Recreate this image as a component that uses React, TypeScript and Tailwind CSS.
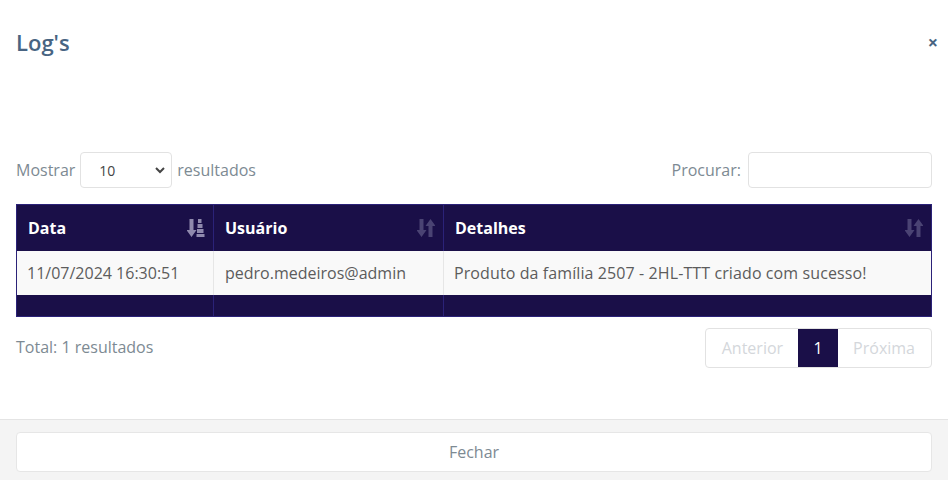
import React from 'react';

const SortIcon = ({ active }: { active?: boolean }) =>
  active ? (
    <svg width="18" height="20" viewBox="0 0 18 20" className="text-[#8f89ad]">
      <path d="M2.5 1h4v11h3L4.5 19-0.5 12h3z" fill="currentColor" />
      <rect x="11" y="1" width="3.5" height="4" fill="currentColor" />
      <rect x="10.5" y="6" width="5" height="4" fill="currentColor" />
      <rect x="10" y="11" width="6.5" height="4" fill="currentColor" />
      <rect x="9.5" y="16" width="8" height="3" fill="currentColor" />
    </svg>
  ) : (
    <svg width="18" height="20" viewBox="0 0 18 20" className="text-[#4a4373]">
      <path d="M2.5 1h4v11h3L4.5 19-0.5 12h3z" fill="currentColor" />
      <path d="M11.5 19h4V8h3L13.5 1 8.5 8h3z" fill="currentColor" />
    </svg>
  );

const App: React.FC = () => {
  const font = { fontFamily: '"Open Sans", sans-serif' };
  return (
    <div className="w-[948px] h-[480px] bg-white flex flex-col text-[#5c5c5c]" style={font}>
      <div className="flex items-center justify-between px-4 pt-[25px] pb-[16px]">
        <h1 className="text-[22px] font-semibold text-[#486482] leading-[34px]">Log's</h1>
        <button className="text-[#486482] text-[18px] font-bold leading-none mr-[-6px]">×</button>
      </div>

      <div className="px-4 pt-[77px]">
        <div className="flex items-center justify-between h-9">
          <div className="flex items-center gap-[5px] text-[16px] text-[#7d8a93]">
            <span>Mostrar</span>
            <div className="w-[92px] h-9 border border-[#e2e2e2] rounded flex items-center justify-between pl-[18px] pr-[4px] text-[14px] text-[#444]">
              <span>10</span>
              <svg width="14" height="14" viewBox="0 0 14 14">
                <path d="M3 5l4 4 4-4" stroke="#444" strokeWidth="2" fill="none" />
              </svg>
            </div>
            <span>resultados</span>
          </div>
          <div className="flex items-center gap-[7px] text-[16px] text-[#7d8a93]">
            <span>Procurar:</span>
            <div className="w-[184px] h-9 border border-[#e2e2e2] rounded" />
          </div>
        </div>

        <div className="mt-4 border border-[#2b2278] bg-[#1a0f48]">
          <div className="grid grid-cols-[197px_230px_1fr] h-[46px] text-white font-bold text-[16px]">
            <div className="flex items-center justify-between pl-[11px] pr-[8px] border-r border-[#2b2278]">
              <span>Data</span>
              <SortIcon active />
            </div>
            <div className="flex items-center justify-between pl-[11px] pr-[8px] border-r border-[#2b2278]">
              <span>Usuário</span>
              <SortIcon />
            </div>
            <div className="flex items-center justify-between pl-[11px] pr-[8px]">
              <span>Detalhes</span>
              <SortIcon />
            </div>
          </div>
          <div className="grid grid-cols-[197px_230px_1fr] h-[44px] bg-[#f9f9f9] text-[16px] text-[#5c5c5c]">
            <div className="flex items-center pl-[10px] border-r border-[#e6e6e6]">11/07/2024 16:30:51</div>
            <div className="flex items-center pl-[11px] border-r border-[#e6e6e6]">pedro.medeiros@admin</div>
            <div className="flex items-center pl-[10px] tracking-[0.1px]">Produto da família 2507 - 2HL-TTT criado com sucesso!</div>
          </div>
          <div className="grid grid-cols-[197px_230px_1fr] h-[21px]">
            <div className="border-r border-[#2b2278]" />
            <div className="border-r border-[#2b2278]" />
            <div />
          </div>
        </div>

        <div className="flex items-start justify-between mt-[11px]">
          <span className="text-[16px] text-[#7d8a93] pt-[7px]">Total: 1 resultados</span>
          <div className="flex h-10 border border-[#e2e2e2] rounded text-[16px]">
            <span className="flex items-center pl-[16px] pr-[15px] text-[#d4d7db]">Anterior</span>
            <span className="flex items-center justify-center w-10 bg-[#1a0f48] text-white">1</span>
            <span className="flex items-center pl-[15px] pr-[16px] text-[#d4d7db]">Próxima</span>
          </div>
        </div>
      </div>

      <div className="flex-1" />
      <div className="border-t border-[#e4e4e4] bg-[#f4f4f4] px-4 pt-3 pb-2 h-[61px]">
        <button className="w-full h-10 bg-white border border-[#e6e6e6] rounded text-[16px] text-[#7d8a93]">Fechar</button>
      </div>
    </div>
  );
};

export default App;
